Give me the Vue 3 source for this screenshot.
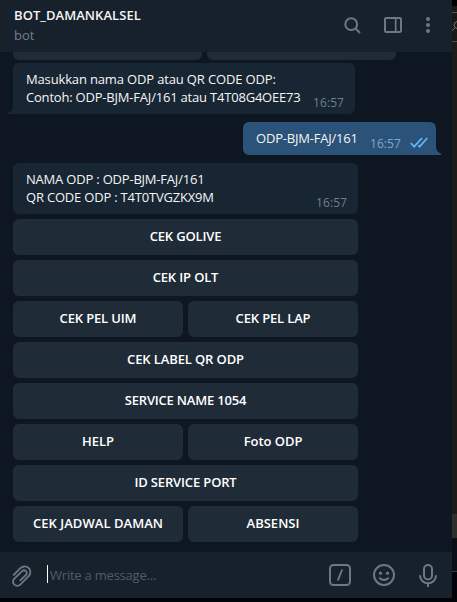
<script setup>
const keyboard = [
  [{ text: 'CEK GOLIVE', track: -0.15 }],
  [{ text: 'CEK IP OLT', track: -0.15 }],
  [{ text: 'CEK PEL UIM', track: -0.15 }, { text: 'CEK PEL LAP', track: -0.15 }],
  [{ text: 'CEK LABEL QR ODP', track: -0.12 }],
  [{ text: 'SERVICE NAME 1054', track: -0.2 }],
  [{ text: 'HELP', track: 0 }, { text: 'Foto ODP', track: -0.05 }],
  [{ text: 'ID SERVICE PORT', track: -0.15 }],
  [{ text: 'CEK JADWAL DAMAN', track: 0.05 }, { text: 'ABSENSI', track: 0 }],
]
</script>

<template>
  <div class="screen">
    <main class="chat">
      <header class="topbar">
        <div class="peer">
          <h1>BOT_DAMANKALSEL</h1>
          <p>bot</p>
        </div>
        <svg class="ico search" width="18" height="18" viewBox="0 0 18 18"><circle cx="7.2" cy="7.2" r="5.9" /><path d="M11.3 11.3 16 16" /></svg>
        <svg class="ico panel" width="18" height="16" viewBox="0 0 18 16"><rect x="1" y="1" width="16" height="14" rx="1.2" /><path d="M11.7 1V15" /></svg>
        <svg class="dots" width="4" height="16" viewBox="0 0 4 16"><circle cx="2" cy="2" r="2" /><circle cx="2" cy="8" r="2" /><circle cx="2" cy="14" r="2" /></svg>
      </header>

      <section class="history">
        <div class="cut"><span></span><span></span></div>
        <div class="bubble in first">
          <p><span class="snug">Masukkan nama ODP atau QR CODE ODP:</span><br />Contoh: ODP-BJM-FAJ/161 atau T4T08G4OEE73</p>
          <time>16:57</time>
          <svg class="tail left" width="7" height="9" viewBox="0 0 7 9"><path d="M7 0H6Q6 5.5 0.4 8Q0 9 1 9H7Z" /></svg>
        </div>
        <div class="bubble out">
          <p>ODP-BJM-FAJ/161</p>
          <time>16:57</time>
          <svg class="checks" width="18" height="11" viewBox="0 0 18 11"><path d="M0.8 6 4.2 9.6 12 1M8.3 8.4 9.6 9.6 17.3 1" /></svg>
          <svg class="tail right" width="7" height="9" viewBox="0 0 7 9"><path d="M0 0H1Q1 5.5 6.2 8Q7 9 6 9H0Z" /></svg>
        </div>
        <div class="bubble in second">
          <p>NAMA ODP : ODP-BJM-FAJ/161<br />QR CODE ODP : T4T0TVGZKX9M</p>
          <time>16:57</time>
        </div>
        <div class="keyboard">
          <div v-for="(row, i) in keyboard" :key="i" class="krow">
            <button v-for="key in row" :key="key.text" :style="{ letterSpacing: key.track + 'px' }">{{ key.text }}</button>
          </div>
        </div>
      </section>

      <footer class="composer">
        <svg class="ico clip" width="20" height="22" viewBox="0 0 20 22"><path d="M1.2 10.5 8.1 3.4C10.2 1.2 13.8.7 16.4 2.8C19 5 19 8.8 16.7 11.2L8.5 19.4C6.8 21.1 4.1 21.2 2.4 19.6C.7 17.9.8 15.4 2.4 13.7L9.9 6.3C11.1 5.1 12.9 5.1 14 6.2C15.1 7.3 15 8.9 13.9 10L7.7 15.8" /></svg>
        <i class="caret"></i>
        <span class="placeholder">Write a message...</span>
        <svg class="ico slash" width="22" height="22" viewBox="0 0 22 22"><rect x="1" y="1" width="20" height="20" rx="3.5" /><path d="M13.2 5.5 8.8 16.5" /></svg>
        <svg class="ico smile" width="22" height="22" viewBox="0 0 22 22"><circle cx="11" cy="11" r="10" /><path d="M6.3 13.7Q11 18.3 15.7 13.7" /><circle class="eye" cx="7.5" cy="9.2" r="1.6" /><circle class="eye" cx="14.5" cy="9.2" r="1.6" /></svg>
        <svg class="ico mic" width="18" height="23" viewBox="0 0 18 23"><rect x="5" y="1" width="8" height="14.5" rx="4" /><path d="M1 11.3C1 21.8 17 21.8 17 11.3M9 19V23" /></svg>
      </footer>
    </main>

    <aside class="behind">
      <div class="b-top"></div>
      <div class="b-search"><svg width="5" height="14" viewBox="0 0 5 14"><path d="M5 1.5Q2 2 2 5.5Q2.5 8 5 8.5M2.7 8 0 11" /></svg></div>
      <div class="b-page"></div>
      <div class="b-thumb"></div>
      <div class="b-gap"></div>
      <div class="b-end"></div>
    </aside>
  </div>
</template>

<style>
body { margin: 0; background: #020308; overflow: hidden; }
</style>

<style scoped>
* { box-sizing: border-box; }
.screen { display: flex; width: 457px; height: 602px; background: #020308; font: 13px/18px "Open Sans", "Noto Sans", sans-serif; color: #f5f5f5; }
h1, p { margin: 0; font-size: 13px; }
.chat { display: flex; flex-direction: column; width: 452px; height: 598px; background: #0e1621; }
.topbar { display: flex; height: 52px; flex: none; padding: 0 22px 0 14px; background: #17212b; align-items: flex-start; }
.peer { flex: 1; padding-top: 6px; }
h1 { line-height: 18px; font-weight: 600; white-space: nowrap; letter-spacing: 0.06px; }
.peer p { line-height: 18px; margin-top: 2px; color: #6d7f8f; }
.ico { fill: none; stroke: #6c7883; stroke-width: 2; flex: none; }
.search { margin: 17px 22px 0 0; }
.panel { margin: 17px 24px 0 0; }
.panel path { stroke-width: 1.7; }
.dots { flex: none; margin-top: 17px; fill: #6c7883; }
.history { height: 500px; flex: none; padding-left: 13px; display: flex; flex-direction: column; align-items: flex-start; }
.cut { display: flex; gap: 5px; height: 8px; margin-bottom: 3px; }
.cut span { width: 189px; background: #1f2c38; border-radius: 0 0 6px 6px; }
.bubble { position: relative; display: flex; flex: none; justify-content: space-between; background: #182533; border-radius: 6px; padding: 7px 11px 0 13px; white-space: nowrap; }
.bubble p { letter-spacing: -0.2px; }
.bubble .snug { letter-spacing: -0.15px; }
.first { width: 342px; height: 51px; border-bottom-left-radius: 0; }
.second { width: 345px; height: 51px; margin-top: 8px; }
.out { width: 193px; height: 33px; margin: 8px 16px 0 0; align-self: flex-end; justify-content: flex-start; background: #2b5278; border-bottom-right-radius: 0; padding-right: 8px; }
.out p { width: 101px; }
time { color: #6d7f8f; font-size: 12px; align-self: flex-end; line-height: 16px; margin-bottom: 3px; letter-spacing: 0.06px; }
.out time { color: #7da8d3; margin-left: 13px; width: 31px; }
.checks { margin: 8px 0 0 9px; flex: none; fill: none; stroke: #65b4f5; stroke-width: 1.8; }
.tail { position: absolute; bottom: 0; }
.tail.left { left: -6px; fill: #182533; }
.tail.right { right: -6px; fill: #2b5278; }
.keyboard { width: 345px; display: flex; flex-direction: column; gap: 5px; margin-top: 5px; }
.krow { display: flex; gap: 5px; height: 36px; }
button { flex: 1 1 0; min-width: 0; border: 0; border-radius: 6px; padding: 0 0 2px; background: #1f2c38; color: #fff; font: 600 13px/18px "Open Sans", "Noto Sans", sans-serif; white-space: nowrap; }
.composer { display: flex; height: 46px; flex: none; align-items: center; background: #17212b; padding: 0 15px 0 12px; }
.clip { margin-top: 2px; stroke-width: 1.8; }
.caret { width: 1px; height: 18px; background: #fff; margin: -2px 2px 0 15px; }
.placeholder { flex: 1; color: #4f5c69; letter-spacing: -0.22px; }
.slash { margin-right: 22px; }
.smile { margin-right: 24px; }
.smile .eye { fill: #6c7883; stroke: none; }
.mic { margin-top: 1px; }
.behind { display: flex; flex-direction: column; width: 5px; height: 602px; }
.b-top { height: 12px; background: linear-gradient(#000 50%, #17191b 50%); }
.b-search { height: 30px; background: #17181a; border-top: 1px solid #505254; border-bottom: 1px solid #505254; padding-top: 7px; }
.b-search svg { display: block; fill: none; stroke: #77736a; }
.b-page { height: 472px; background: #1c1c1c; }
.b-thumb { height: 24px; background: #2e2e2f; }
.b-gap { height: 34px; background: #0b0e17; border-bottom: 1px solid #393b3f; }
.b-end { flex: 1; background: #020308; }
</style>
